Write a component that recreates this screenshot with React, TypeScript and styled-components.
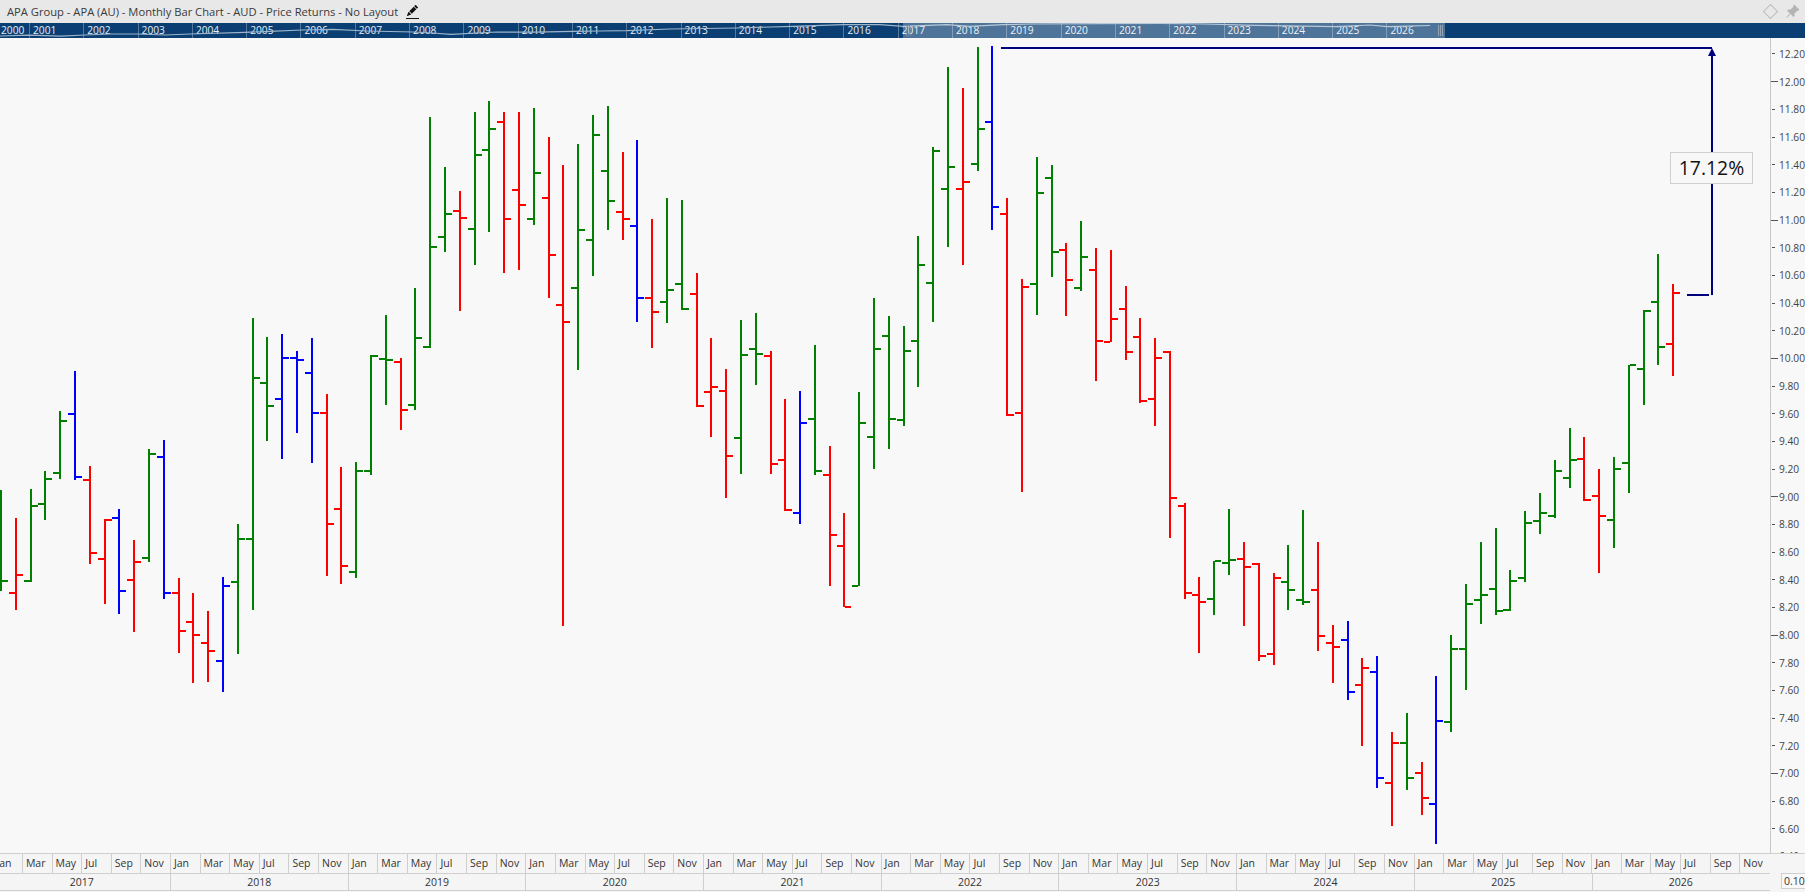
import React from 'react';
import styled, { createGlobalStyle } from 'styled-components';
import { BsPencilFill, BsPinAngleFill } from 'react-icons/bs';

const GlobalStyle = createGlobalStyle`
  html, body { margin: 0; padding: 0; background: #f8f8f8; }
  body { font-family: "Open Sans", "Noto Sans", sans-serif; }
`;

type Row = [number, number, number, number, number, 'g' | 'r' | 'b'];
type Segment = { x0: number; y0: number; rows: Row[] };

/* Each row: stem x, high, low, open, close — as read off 300x620 crops of the chart. */
const SEGMENTS: Segment[] = [
  { x0: 0, y0: 100, rows: [
    [2,986,1242,1216,1216,'g'],[48,1057,1290,1246,1201,'r'],[93,984,1218,1216,1026,'g'],[135,938,1062,1021,958,'g'],
    [180,787,958,943,811,'g'],[225,685,961,794,953,'b'],[270,926,1173,961,1145,'r'],[315,1060,1275,1160,1062,'r'],
    [357,1034,1300,1057,1241,'b'],[402,1113,1345,1213,1168,'r'],[447,883,1168,1158,895,'g'],[492,860,1262,902,1246,'b'],
    [537,1209,1399,1246,1342,'r'],[579,1247,1474,1320,1353,'r'],[624,1292,1472,1373,1393,'r'],[669,1206,1497,1418,1229,'b'],
    [714,1072,1401,1218,1110,'g'],[759,551,1290,1110,703,'g'],[801,599,862,715,773,'g'],[846,592,908,756,652,'b'],
    [891,635,842,652,658,'b'],
  ]},
  { x0: 300, y0: 80, rows: [
    [36,652,969,740,842,'b'],[81,794,1254,842,1122,'r'],[123,979,1275,1084,1229,'r'],[168,966,1259,1244,988,'g'],
    [213,695,999,988,697,'g'],[258,594,822,705,708,'g'],[303,703,885,713,834,'r'],[345,526,835,821,652,'g'],
    [390,94,678,675,422,'g'],[435,220,435,397,338,'g'],[480,281,584,331,349,'r'],[525,81,468,376,189,'g'],
    [567,53,384,177,123,'g'],[612,81,488,106,351,'r'],[657,81,481,278,316,'r'],[702,71,367,351,235,'g'],
    [747,144,551,298,442,'r'],[789,215,1381,569,611,'r'],[834,162,733,526,379,'g'],[879,89,496,404,139,'g'],
  ]},
  { x0: 600, y0: 80, rows: [
    [24,66,379,230,305,'g'],[69,182,405,333,351,'r'],[111,152,612,369,551,'b'],[156,352,678,551,586,'r'],
    [201,298,615,561,531,'g'],[246,303,581,515,579,'g'],[291,488,827,541,824,'r'],[333,652,903,789,776,'r'],
    [378,731,1057,786,950,'r'],[423,607,996,905,695,'g'],[468,589,771,680,692,'g'],[513,685,996,697,971,'r'],
    [555,807,1089,961,1087,'r'],[600,787,1123,1095,867,'b'],[645,670,999,857,988,'g'],[690,926,1280,998,1150,'r'],
    [732,1095,1334,1178,1332,'r'],[777,789,1280,1279,867,'g'],[822,551,984,902,680,'g'],[867,597,933,647,857,'g'],
  ]},
  { x0: 900, y0: 40, rows: [
    [12,723,976,961,786,'g'],[54,496,878,761,569,'g'],[99,271,713,614,280,'g'],[144,68,524,376,321,'g'],
    [189,121,569,376,359,'r'],[234,18,331,313,225,'g'],[276,15,481,207,422,'b'],[321,400,951,440,948,'r'],
    [366,604,1143,943,624,'r'],[411,296,695,617,386,'g'],[456,316,599,348,536,'g'],[498,513,698,531,606,'r'],
    [543,458,635,627,548,'g'],[588,526,862,581,761,'r'],[633,531,765,763,705,'r'],[678,622,809,680,789,'r'],
    [720,703,917,751,913,'r'],[765,754,976,907,804,'r'],[810,787,1259,789,1158,'r'],[855,1171,1414,1178,1398,'r'],
    [898,1358,1550,1403,1421,'r'],
  ]},
  { x0: 1200, y0: 240, rows: [
    [42,811,948,907,811,'g'],[87,680,847,816,809,'g'],[132,764,976,806,827,'r'],[177,818,1065,819,1052,'r'],
    [222,842,1075,1046,854,'r'],[264,771,936,864,885,'g'],[309,683,923,910,915,'g'],[354,764,1039,885,1001,'r'],
    [399,974,1120,1019,1029,'r'],[444,964,1163,1011,1143,'b'],[486,1057,1280,1125,1082,'r'],[531,1052,1386,1092,1360,'b'],
    [576,1244,1482,1373,1272,'r'],[621,1196,1391,1272,1360,'g'],[666,1320,1454,1348,1411,'r'],[708,1103,1528,1426,1216,'b'],
    [753,999,1244,1218,1034,'g'],[798,870,1138,1034,920,'g'],[843,764,971,910,897,'g'],[888,728,948,882,939,'g'],
  ]},
  { x0: 1500, y0: 240, rows: [
    [30,835,938,935,862,'g'],[75,685,865,854,715,'g'],[120,640,744,710,690,'g'],[165,556,703,697,584,'g'],
    [210,475,627,601,556,'g'],[252,498,659,553,657,'r'],[297,579,842,647,697,'r'],[342,549,779,708,579,'g'],
    [387,315,640,564,316,'g'],[432,178,417,326,180,'g'],[474,35,316,156,270,'g'],[519,112,344,262,134,'r'],
  ]},
];

const BAR_COLORS = { g: '#007f00', r: '#ff0000', b: '#0000ff' };
const XS = 3;
const YS = 2.529;

const BARS = SEGMENTS.flatMap(({ x0, y0, rows }) =>
  rows.map(([x, hi, lo, o, c, col]) => ({
    x: Math.round(x0 + x / XS),
    hi: Math.round(y0 + hi / YS),
    lo: Math.round(y0 + lo / YS),
    o: Math.round(y0 + o / YS),
    c: Math.round(y0 + c / YS),
    fill: BAR_COLORS[col],
  })),
);

const WAVE =
  'M0 13 L29 12.2 L45 12.6 L61 13.2 L85 12 L110 11 L138 11 L165 12 L190 11 L245 9.3 L270 8.4 L302 7 L333 6.3 L367 8 L413 9 L432 10 L451 11.3 L497 9 L535 9.2 L574 8.3 L600 8 L627 7.7 L670 6 L737 5 L793 3.3 L843 1.7 L880 1.7 L903 3.3 L947 1.7 L970 3.3 L1003 1.7 L1030 1 L1100 0.6 L1160 0.4 L1205 1 L1255 2.3 L1335 3.7 L1370 2 L1387 3.7 L1430 2.5';

const NAV_YEARS = Array.from({ length: 27 }, (_, i) => 2000 + i);
const MONTHS = ['Jan', 'Mar', 'May', 'Jul', 'Sep', 'Nov'];
const SCALE_YEARS = Array.from({ length: 10 }, (_, i) => 2017 + i);
const PRICES = Array.from({ length: 30 }, (_, i) => 12.2 - i * 0.2);

const Page = styled.div`
  width: 1805px;
  height: 892px;
  display: flex;
  flex-direction: column;
  overflow: hidden;
  background: #f8f8f8;
  color: #333;
`;

const TitleBar = styled.header`
  height: 23px;
  flex: none;
  display: flex;
  align-items: center;
  padding: 0 5px 0 7px;
  background: #e8e8e8;
  font-size: 11.2px;
`;

const TitleText = styled.span`
  color: #3a3a3a;
  white-space: nowrap;
`;

const EditMark = styled.span`
  display: inline-flex;
  margin-left: 8px;
  width: 13px;
  height: 13px;
  border-bottom: 1px solid #111;
  color: #111;
  font-size: 11px;
  justify-content: center;
`;

const TitleActions = styled.div`
  margin-left: auto;
  display: flex;
  align-items: center;
  gap: 9px;
  color: #b4b4b4;
`;

const Diamond = styled.span`
  display: block;
  width: 9px;
  height: 9px;
  border: 1px solid #bdbdbd;
  transform: rotate(45deg);
`;

const Navigator = styled.div`
  position: relative;
  height: 15px;
  flex: none;
  display: flex;
  background: #0b3f73;
  overflow: hidden;
`;

const NavYear = styled.div<{ $first?: boolean }>`
  flex: none;
  box-sizing: border-box;
  width: ${(p) => (p.$first ? 29 : 54.3)}px;
  height: 15px;
  padding-left: ${(p) => (p.$first ? 1 : 3)}px;
  border-left: ${(p) => (p.$first ? 'none' : '1px solid rgba(255, 255, 255, 0.3)')};
  color: #e6edf4;
  font-size: 10.2px;
  line-height: 15px;
`;

const NavWave = styled.svg`
  position: absolute;
  left: 0;
  top: 0;
  width: 1445px;
  height: 15px;
`;

const NavWindow = styled.div`
  position: absolute;
  left: 903px;
  top: 0;
  width: 542px;
  height: 15px;
  box-sizing: border-box;
  padding: 0 2px 0 3px;
  display: flex;
  justify-content: space-between;
  align-items: center;
  background: rgba(255, 255, 255, 0.28);
`;

const Grip = styled.span<{ $faint?: boolean }>`
  width: 5px;
  height: 11px;
  opacity: ${(p) => (p.$faint ? 0.45 : 0.9)};
  background: repeating-linear-gradient(90deg, #9aa9b8 0 1px, #5a7693 1px 2px);
`;

const ChartRow = styled.main`
  height: 815px;
  flex: none;
  display: flex;
`;

const ChartPane = styled.div`
  position: relative;
  width: 1770px;
  flex: none;
  background: #f8f8f8;
  overflow: hidden;
`;

const ChartSvg = styled.svg`
  display: block;
  width: 1770px;
  height: 815px;
`;

const ChangeLabel = styled.div`
  position: absolute;
  left: 1670px;
  top: 114px;
  width: 83px;
  height: 32px;
  box-sizing: border-box;
  border: 1px solid #cfcfcf;
  background: #f8f8f8;
  color: #111;
  font-size: 19.4px;
  line-height: 30px;
  text-align: center;
`;

const PriceAxis = styled.aside`
  flex: 1;
  box-sizing: border-box;
  border-left: 1px solid #c8c8c8;
  padding-top: 2.16px;
  overflow: hidden;
  background: #f8f8f8;
`;

const PriceRow = styled.div`
  height: 27.68px;
  display: flex;
  align-items: center;
  white-space: nowrap;
  font-size: 10.2px;
  color: #444;
`;

const PriceTick = styled.span<{ $major: boolean }>`
  flex: none;
  width: ${(p) => (p.$major ? 7 : 3)}px;
  height: 1px;
  margin-left: ${(p) => (p.$major ? 0 : 1)}px;
  margin-right: ${(p) => (p.$major ? 1 : 4)}px;
  background: #555;
`;

const Footer = styled.footer`
  height: 39px;
  flex: none;
  display: flex;
  background: #f5f5f5;
  font-size: 10.5px;
  color: #333;
`;

const TimeScale = styled.div`
  width: 1770px;
  flex: none;
  overflow: hidden;
`;

const MonthRow = styled.div`
  height: 20px;
  box-sizing: border-box;
  display: flex;
  margin-left: -7.7px;
  border-top: 1px solid #cfcfcf;
`;

const MonthCell = styled.div`
  flex: none;
  width: 29.62px;
  box-sizing: border-box;
  padding-left: 3px;
  border-left: 1px solid #cfcfcf;
  line-height: 19px;
`;

const YearRow = styled.div`
  height: 18px;
  box-sizing: border-box;
  display: flex;
  margin-left: -7.7px;
  border-top: 1px solid #cfcfcf;
  border-bottom: 1px solid #cfcfcf;
`;

const YearCell = styled.div`
  flex: none;
  width: 177.7px;
  box-sizing: border-box;
  border-left: 1px solid #cfcfcf;
  text-align: center;
  line-height: 16px;
`;

const Corner = styled.div`
  flex: 1;
  box-sizing: border-box;
  border-top: 1px solid #cfcfcf;
  padding: 19px 0 0 11px;
  overflow: hidden;
`;

const ScaleBox = styled.div`
  width: 40px;
  height: 16px;
  box-sizing: border-box;
  border: 1px solid #cfcfcf;
  padding-left: 2px;
  line-height: 14px;
  background: #f8f8f8;
`;

export default function App() {
  return (
    <Page>
      <GlobalStyle />
      <TitleBar>
        <TitleText>APA Group - APA (AU) - Monthly Bar Chart - AUD - Price Returns - No Layout</TitleText>
        <EditMark>
          <BsPencilFill />
        </EditMark>
        <TitleActions>
          <Diamond />
          <BsPinAngleFill size={15} />
        </TitleActions>
      </TitleBar>
      <Navigator>
        {NAV_YEARS.map((y, i) => (
          <NavYear key={y} $first={i === 0}>
            {y}
          </NavYear>
        ))}
        <NavWave viewBox="0 0 1445 15">
          <path d={WAVE} fill="none" stroke="#9db4ca" strokeWidth="1.2" />
        </NavWave>
        <NavWindow>
          <Grip $faint />
          <Grip />
        </NavWindow>
      </Navigator>
      <ChartRow>
        <ChartPane>
          <ChartSvg viewBox="0 38 1770 815" shapeRendering="crispEdges">
            {BARS.map((b) => (
              <g key={b.x} fill={b.fill}>
                <rect x={b.x - 1} y={b.hi} width={2} height={b.lo - b.hi} />
                <rect x={b.x - 7} y={b.o - 1} width={6} height={2} />
                <rect x={b.x + 1} y={b.c - 1} width={6} height={2} />
              </g>
            ))}
            <g fill="#00007f">
              <rect x={1001} y={47} width={711} height={2} />
              <rect x={1711} y={54} width={2} height={241} />
              <rect x={1687} y={294} width={22} height={2} />
              <polygon points="1708,56 1712,48 1716,56" shapeRendering="geometricPrecision" />
            </g>
          </ChartSvg>
          <ChangeLabel>17.12%</ChangeLabel>
        </ChartPane>
        <PriceAxis>
          {PRICES.map((p, i) => (
            <PriceRow key={i}>
              <PriceTick $major={i % 5 === 1} />
              {p.toFixed(2)}
            </PriceRow>
          ))}
        </PriceAxis>
      </ChartRow>
      <Footer>
        <TimeScale>
          <MonthRow>
            {SCALE_YEARS.flatMap((y) =>
              MONTHS.map((m) => <MonthCell key={`${y}${m}`}>{m}</MonthCell>),
            )}
          </MonthRow>
          <YearRow>
            {SCALE_YEARS.map((y) => (
              <YearCell key={y}>{y}</YearCell>
            ))}
          </YearRow>
        </TimeScale>
        <Corner>
          <ScaleBox>0.10</ScaleBox>
        </Corner>
      </Footer>
    </Page>
  );
}
